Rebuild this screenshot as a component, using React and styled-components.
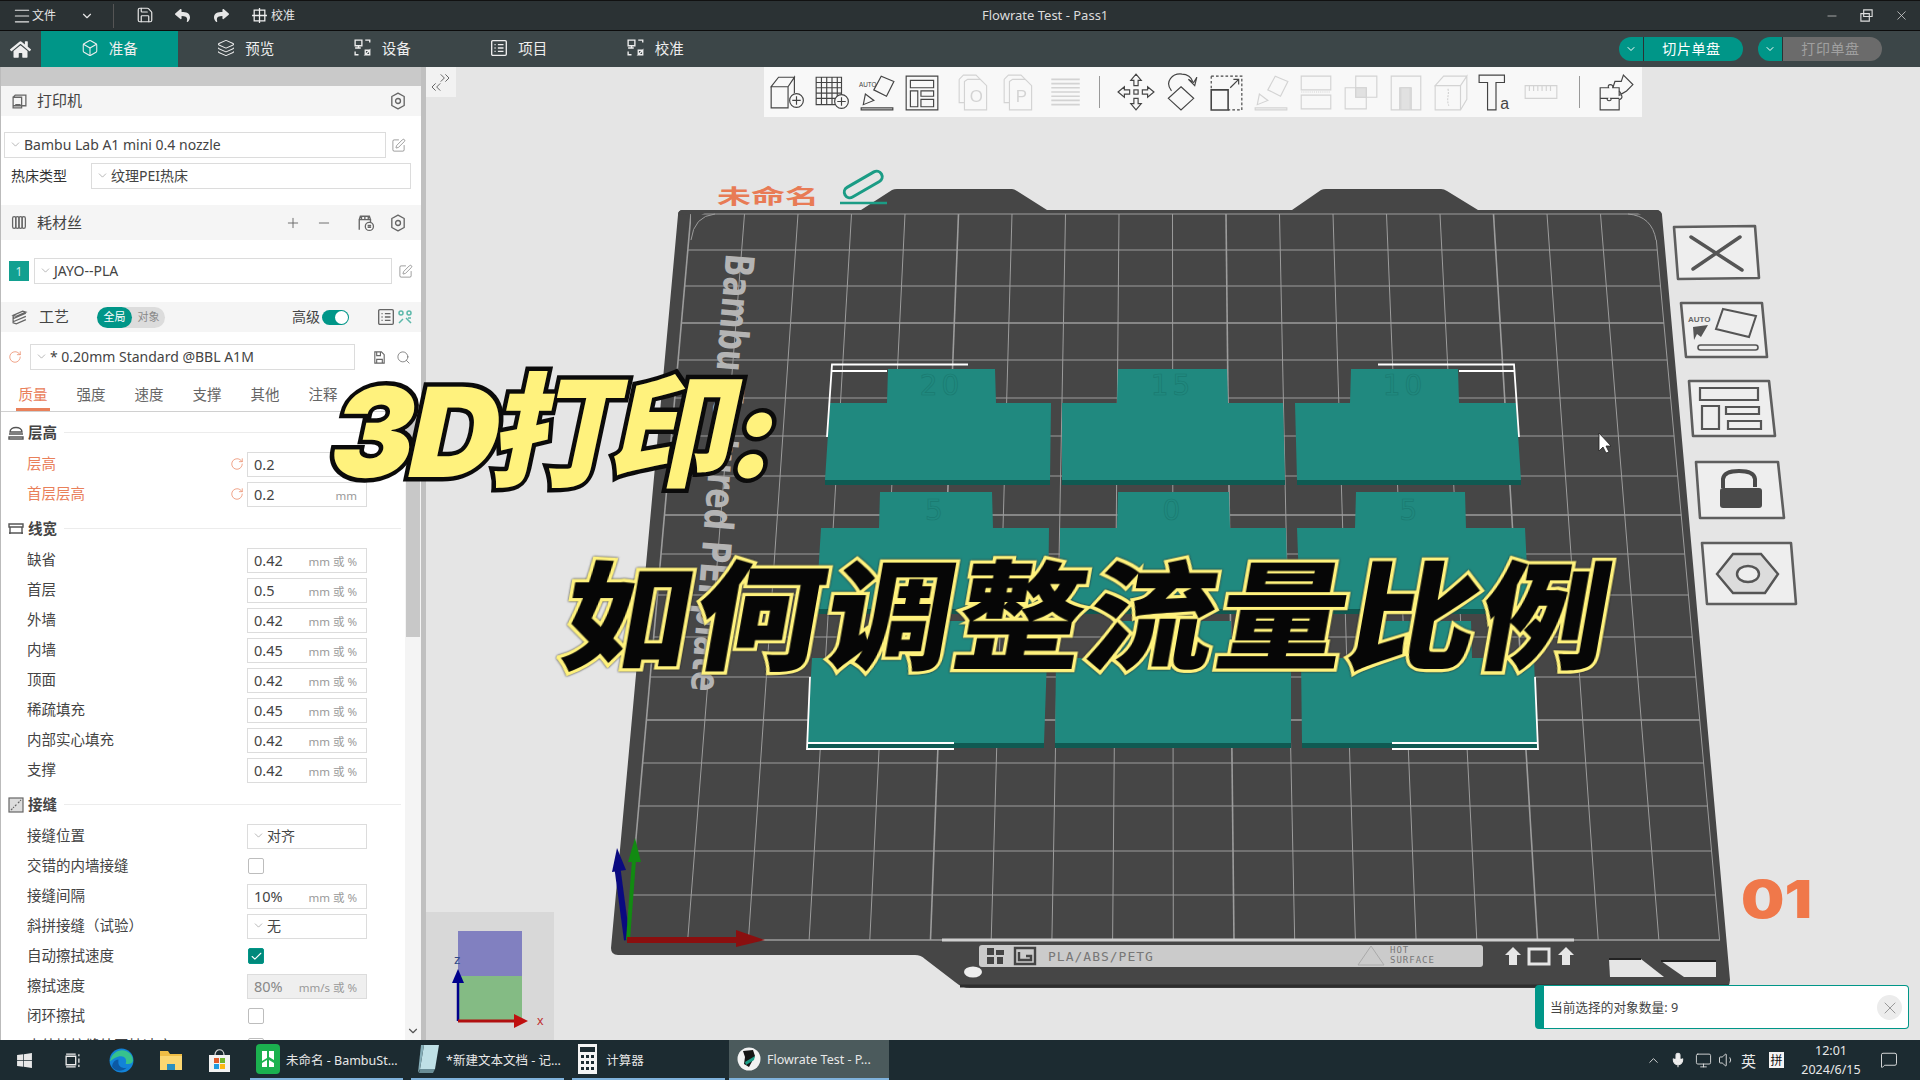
import React from "react";
import styled, { createGlobalStyle } from "styled-components";
import {
  Menu,
  ChevronDown,
  Save,
  Box,
  Layers,
  SquarePen,
  Plus,
  Minus,
  Search,
  Check,
  X,
  RotateCw,
  ChevronsLeft,
  ChevronsRight,
  ChevronUp,
  Mic,
  Volume1,
  Monitor,
  MessageSquare,
} from "lucide-react";
import { FaReply, FaShare, FaHome, FaWindows } from "react-icons/fa";

const UI_FONT = `"Noto Sans", "Noto Sans CJK SC", sans-serif`;
const TEAL = "#009688";
const ORANGE = "#e9805a";

const GlobalStyle = createGlobalStyle`
  html, body {
    margin: 0;
    padding: 0;
    width: 1920px;
    height: 1080px;
    overflow: hidden;
    background: #e5e5e5;
    font-family: ${UI_FONT};
  }
  * { box-sizing: border-box; }
`;

const Root = styled.div`
  position: relative;
  width: 1920px;
  height: 1080px;
  display: flex;
  flex-direction: column;
  overflow: hidden;
`;

/* ---------- title bar ---------- */

const TitleBar = styled.div`
  height: 31px;
  flex: none;
  display: flex;
  align-items: center;
  background: #2b3234;
  border-top: 1px solid #111;
  border-bottom: 1px solid #0c0c0c;
  color: #e6e6e6;
`;

const TitleLeft = styled.div`
  width: 982px;
  flex: none;
  display: flex;
  align-items: center;
  padding-left: 12px;
  font-size: 12px;
`;

const TitleSep = styled.div`
  width: 1px;
  height: 24px;
  background: #555;
  margin: 0 22px 0 19px;
`;

const TitleBtn = styled.span`
  display: flex;
  align-items: center;
  width: ${(p) => p.$w || 39}px;
  padding-bottom: 1px;
`;

const WindowTitle = styled.div`
  flex: 1;
  font-size: 13px;
  padding-bottom: 1px;
  color: #dcdcdc;
`;

const WindowControls = styled.div`
  display: flex;
  align-items: center;
  gap: 20px;
  padding-right: 11px;
  color: #d8d8d8;
`;

/* ---------- nav bar ---------- */

const NavBar = styled.div`
  height: 36px;
  flex: none;
  display: flex;
  align-items: stretch;
  background: #3c4648;
  color: #eee;
`;

const HomeCell = styled.div`
  width: 41px;
  display: flex;
  align-items: center;
  justify-content: center;
`;

const NavTab = styled.div`
  width: 136.5px;
  display: flex;
  align-items: center;
  justify-content: center;
  gap: 10px;
  padding-bottom: 3px;
  font-size: 14.5px;
  background: ${(p) => (p.$active ? TEAL : "transparent")};
`;

const NavActions = styled.div`
  margin-left: auto;
  display: flex;
  align-items: center;
  gap: 15px;
  padding-right: 38px;
`;

const SplitButton = styled.div`
  width: 124px;
  height: 24px;
  display: flex;
  border-radius: 12px;
  overflow: hidden;
  font-size: 14px;
`;

const SplitArrow = styled.div`
  width: 25px;
  background: ${TEAL};
  border-right: 1px solid #2b3234;
  display: flex;
  align-items: center;
  justify-content: center;
  color: #fff;
`;

const SplitLabel = styled.div`
  flex: 1;
  display: flex;
  align-items: center;
  justify-content: center;
  padding: 0 4px 2px 0;
  letter-spacing: 0.6px;
  background: ${(p) => (p.$off ? "#6b6b6b" : TEAL)};
  color: ${(p) => (p.$off ? "#a0a0a0" : "#fff")};
`;

/* ---------- left panel ---------- */

const Main = styled.div`
  flex: 1;
  min-height: 0;
  display: flex;
`;

const Panel = styled.div`
  position: relative;
  width: 421px;
  flex: none;
  overflow: hidden;
  background: #fff;
  border-left: 1px solid #bbb;
  color: #333;
`;

const TopStrip = styled.div`
  height: 19px;
  background: #c9c9c9;
`;

const PanelHeader = styled.div`
  height: ${(p) => p.$h || 30}px;
  margin-top: ${(p) => p.$mt || 0}px;
  display: flex;
  align-items: center;
  background: #f5f5f5;
  padding: 0 ${(p) => p.$pr || 14}px 0 10px;
  font-size: 15px;
  color: #444;
`;

const HeaderTitle = styled.span`
  margin-left: ${(p) => p.$ml || 9}px;
  padding-bottom: 3px;
`;

const HeaderEnd = styled.div`
  margin-left: ${(p) => p.$ml || "auto"};
  display: flex;
  align-items: center;
  gap: ${(p) => p.$gap || 0}px;
  color: #666;
`;

const IconGap = styled.span`
  width: ${(p) => p.$w}px;
  flex: none;
`;

const FormRow = styled.div`
  height: 26px;
  margin-top: ${(p) => p.$mt || 0}px;
  padding-left: ${(p) => p.$pl || 0}px;
  display: flex;
  align-items: center;
  font-size: 14px;
  color: #555;
`;

const SelectBox = styled.div`
  height: ${(p) => p.$h || 26}px;
  width: ${(p) => p.$w}px;
  margin-left: ${(p) => p.$ml || 0}px;
  display: flex;
  align-items: center;
  gap: 2px;
  padding: 0 0 2px 4px;
  background: #fff;
  border: 1px solid #dcdcdc;
  font-size: 14px;
  color: #444;
`;

const BedLabel = styled.span`
  width: 80px;
  padding-bottom: 2px;
  color: #333;
`;

const Swatch = styled.div`
  width: 20px;
  height: 20px;
  background: #12a090;
  color: #cdeee9;
  font-size: 12px;
  display: flex;
  align-items: center;
  justify-content: center;
`;

const ModeToggle = styled.div`
  width: 68px;
  height: 21px;
  margin-left: 28px;
  display: flex;
  border-radius: 11px;
  background: #dcdcdc;
  font-size: 11px;
  color: #888;
`;

const ModeItem = styled.span`
  width: ${(p) => (p.$on ? 35 : 33)}px;
  display: flex;
  align-items: center;
  justify-content: center;
  padding-bottom: 2px;
  border-radius: 11px;
  background: ${(p) => (p.$on ? TEAL : "transparent")};
  color: ${(p) => (p.$on ? "#fff" : "#888")};
`;

const SwitchTrack = styled.span`
  width: 27px;
  height: 15px;
  margin: 0 28px 0 2px;
  border-radius: 8px;
  background: ${TEAL};
  position: relative;
`;

const SwitchKnob = styled.span`
  position: absolute;
  right: 1px;
  top: 1px;
  width: 13px;
  height: 13px;
  border-radius: 50%;
  background: #fff;
`;

const AdvLabel = styled.span`
  padding-bottom: 3px;
  font-size: 14px;
  color: #444;
`;

const TabRow = styled.div`
  height: 34px;
  margin-top: 8px;
  display: flex;
  align-items: stretch;
  padding-left: 15px;
  border-bottom: 1px solid #d0d0d0;
`;

const ParamTab = styled.div`
  width: 34px;
  margin-right: 24px;
  display: flex;
  align-items: center;
  justify-content: center;
  font-size: 14.5px;
  white-space: nowrap;
  color: ${(p) => (p.$active ? ORANGE : "#666")};
  border-bottom: 3px solid ${(p) => (p.$active ? ORANGE : "transparent")};
`;

const SectionHeader = styled.div`
  height: 33px;
  margin-top: ${(p) => p.$mt || 3}px;
  width: 400px;
  display: flex;
  align-items: center;
  padding-left: 7px;
  gap: 4px;
  font-size: 14.5px;
  font-weight: 700;
  color: #444;

  &::after {
    content: "";
    flex: 1;
    height: 1px;
    margin-left: 3px;
    background: #ececec;
  }
`;

const SectionTitle = styled.span`
  padding-bottom: 3px;
`;

const ParamRow = styled.div`
  height: 30px;
  width: 400px;
  display: flex;
  align-items: center;
  padding-left: 26px;
  font-size: 14.5px;
  color: ${(p) => (p.$mod ? ORANGE : "#444")};
`;

const ParamLabel = styled.span`
  flex: 1;
  padding-bottom: 3px;
  white-space: nowrap;
`;

const ResetSlot = styled.span`
  width: ${(p) => p.$w || 17}px;
  display: flex;
  color: ${ORANGE};
`;

const FieldSlot = styled.div`
  width: 120px;
  margin-right: 34px;
`;

const Field = styled.div`
  height: 25px;
  display: flex;
  align-items: center;
  justify-content: space-between;
  padding: 0 9px 1px 6px;
  border: 1px solid #dcdcdc;
  background: ${(p) => (p.$off ? "#efefef" : "#fff")};
  color: ${(p) => (p.$off ? "#888" : "#444")};
  font-size: 14.5px;
`;

const Unit = styled.span`
  font-size: 11.5px;
  padding-top: 3px;
  color: #999;
`;

const CheckBox = styled.div`
  width: 16px;
  height: 16px;
  margin-left: 1px;
  border-radius: 2px;
  border: 1px solid ${(p) => (p.$on ? TEAL : "#bdbdbd")};
  background: ${(p) => (p.$on ? "#00897b" : "#fff")};
  display: flex;
  align-items: center;
  justify-content: center;
  color: #fff;
`;

const ScrollTrack = styled.div`
  position: absolute;
  right: 0;
  top: 345px;
  bottom: 0;
  width: 16px;
  background: #f4f4f4;
`;

const ScrollThumb = styled.div`
  height: 225px;
  margin: 0 1px;
  background: #c8c8c8;
`;

const ScrollArrow = styled.div`
  position: absolute;
  right: 1px;
  bottom: 2px;
  color: #555;
  display: flex;
`;

const PanelDivider = styled.div`
  width: 5px;
  flex: none;
  background: #c0c0c0;
`;

/* ---------- 3d canvas ---------- */

const Canvas = styled.div`
  position: relative;
  flex: 1;
  background: #e5e5e5;
  overflow: hidden;
`;

const SceneSvg = styled.svg`
  position: absolute;
  left: 0;
  top: 0;
  width: 1494px;
  height: 973px;
`;

const Toolbar = styled.div`
  position: absolute;
  left: 338px;
  top: 0;
  width: 878px;
  height: 50px;
  display: flex;
  align-items: center;
  background: #f8f8f8;
`;

const ToolBtn = styled.div`
  width: 45px;
  flex: none;
  margin-left: ${(p) => p.$ml || 0}px;
  display: flex;
  justify-content: center;
  opacity: ${(p) => (p.$off ? 0.2 : 1)};
`;

const ToolSep = styled.div`
  width: 1px;
  height: 32px;
  flex: none;
  margin: 0 13px 0 ${(p) => p.$ml}px;
  background: #999;
`;

const CollapseBtn = styled.div`
  position: absolute;
  left: 0;
  top: 0;
  width: 30px;
  height: 30px;
  background: #f2f2f2;
  color: #444;
`;

const CollapseUp = styled.span`
  position: absolute;
  right: 3px;
  top: 3px;
  display: flex;
`;

const CollapseDown = styled.span`
  position: absolute;
  left: 2px;
  bottom: 2px;
  display: flex;
`;

const Notice = styled.div`
  position: absolute;
  left: 1109px;
  top: 918px;
  width: 374px;
  height: 44px;
  display: flex;
  align-items: center;
  padding: 0 0 2px 6px;
  background: #fff;
  border: 1px solid ${TEAL};
  border-left: 9px solid ${TEAL};
  border-radius: 4px;
  font-size: 12.7px;
  color: #444;
`;

const NoticeClose = styled.span`
  position: absolute;
  right: 6px;
  top: 9px;
  width: 25px;
  height: 25px;
  border-radius: 50%;
  background: #ececec;
  color: #888;
  display: flex;
  align-items: center;
  justify-content: center;
`;

/* ---------- taskbar ---------- */

const TaskBar = styled.div`
  height: 40px;
  flex: none;
  display: flex;
  align-items: stretch;
  background: #1c2b31;
  color: #e8e8e8;
  font-size: 12.5px;
`;

const TaskIcon = styled.div`
  width: ${(p) => p.$w}px;
  flex: none;
  display: flex;
  align-items: center;
  justify-content: center;
`;

const TaskApp = styled.div`
  width: ${(p) => (p.$active ? 160 : 153)}px;
  flex: none;
  margin-left: ${(p) => (p.$active ? 4 : 8)}px;
  display: flex;
  align-items: center;
  gap: 6px;
  padding-left: ${(p) => (p.$active ? 8 : 6)}px;
  white-space: nowrap;
  background: ${(p) => (p.$active ? "#4b5a5c" : "transparent")};
  border-bottom: 2px solid #7fb2dc;
`;

const Tray = styled.div`
  margin-left: auto;
  display: flex;
  align-items: center;
  padding-right: 22px;
`;

const TrayItem = styled.span`
  display: flex;
  align-items: center;
  margin-left: ${(p) => p.$ml || 0}px;
  font-size: ${(p) => p.$size || 13}px;
`;

const ImeBox = styled.span`
  width: 15px;
  height: 16px;
  margin-left: 13px;
  display: flex;
  align-items: center;
  justify-content: center;
  background: #f4f4f4;
  color: #111;
  font-size: 12px;
`;

const Clock = styled.div`
  width: 62px;
  margin: 0 18px 0 16px;
  text-align: center;
  font-size: 12.5px;
  line-height: 19px;
`;

/* ---------- thumbnail caption over the whole shot ---------- */

const CaptionTop = styled.div`
  position: absolute;
  left: 334px;
  top: 358px;
  font-family: "Inter", "Noto Sans CJK SC", sans-serif;
  font-weight: 900;
  font-size: 124px;
  line-height: 1.2;
  letter-spacing: -5px;
  white-space: nowrap;
  color: #fff27d;
  -webkit-text-stroke: 9px #0b0b0b;
  paint-order: stroke fill;
  transform: skewX(-12deg);
`;

const CaptionMain = styled.div`
  position: absolute;
  left: 566px;
  top: 520px;
  font-family: "Noto Sans CJK SC", sans-serif;
  font-weight: 900;
  font-size: 128px;
  line-height: 1.4;
  letter-spacing: 3px;
  white-space: nowrap;
  color: #060606;
  -webkit-text-stroke: 7px #fff27d;
  paint-order: stroke fill;
  transform: skewX(-10deg) scaleY(0.92);
  filter: drop-shadow(0 0 1px #222);
`;

/* ---------- small drawn icons ---------- */

const Ic = ({ s = 16, children, color = "#666", sw = 1.2, fill = "none" }) => (
  <svg width={s} height={s} viewBox="0 0 16 16" fill={fill} stroke={color} strokeWidth={sw}>
    {children}
  </svg>
);

const GearHex = () => (
  <Ic s={18}>
    <path d="M8 1l5.5 3v8L8 15l-5.5-3V4z" strokeLinejoin="round" />
    <circle cx="8" cy="8" r="2.2" />
  </Ic>
);

const PrinterIcon = () => (
  <Ic s={17}>
    <path d="M4 2h10v10H2V4z M2 4h8v10H2z M4 11h5" />
  </Ic>
);

const SpoolIcon = () => (
  <Ic s={17}>
    <rect x="1.5" y="2.5" width="3" height="11" rx="1.5" />
    <rect x="4.5" y="2.5" width="3" height="11" rx="1.5" />
    <rect x="7.5" y="2.5" width="3" height="11" rx="1.5" />
    <rect x="10.5" y="2.5" width="3" height="11" rx="1.5" />
  </Ic>
);

const StackIcon = () => (
  <Ic s={17}>
    <path d="M2 6l9-4 3 1-9 4zM2 9l12-5M2 12l12-5M2 6v7l3 1 9-4" />
  </Ic>
);

const DeviceIcon = ({ color = "#eee" }) => (
  <Ic s={18} color={color}>
    <path d="M1 1h6v5H1zM4 6v2M1 8h5M10 1h4v2M14 10v4h-4zM1 11v3h3M10 10h4v4h-4z" />
  </Ic>
);

const ProjectIcon = () => (
  <Ic s={18} color="#eee">
    <rect x="1.5" y="1.5" width="13" height="13" rx="1" />
    <path d="M4 5h1M7 5h5M4 8h1M7 8h5M4 11h1M7 11h5" />
  </Ic>
);

const SectionLayers = () => (
  <Ic s={16} color="#555" sw={1.4}>
    <path d="M2 7c0-6 12-6 12 0zM1 9h14M1 12h14v2H1z" />
  </Ic>
);

const SectionWidth = () => (
  <Ic s={16} color="#555" sw={1.4}>
    <path d="M1 3h14v3H1zM1 12h14M2 6v7M14 6v7" />
  </Ic>
);

const SectionSeam = () => (
  <Ic s={16} color="#666">
    <rect x="1" y="1" width="14" height="14" fill="#ddd" />
    <path d="M3 13l3-3M7 9l2-2M10 6l3-3" strokeDasharray="2 1" />
  </Ic>
);

const CalibIcon = ({ color = "#eee" }) => (
  <Ic s={17} color={color}>
    <path d="M3 3h10v10H3zM8 1v14M1 8h14" />
  </Ic>
);

const BarsIcon = () => (
  <Ic s={18} color="#666">
    <rect x="1.5" y="1.5" width="13" height="13" rx="1" />
    <path d="M4 5h1M7 5h5M4 8h1M7 8h5M4 11h1M7 11h5" />
  </Ic>
);

const FilterIcon = () => (
  <Ic s={16} color="#5cb8aa" sw={1.5}>
    <circle cx="4" cy="4" r="2" />
    <circle cx="12" cy="4" r="2" />
    <path d="M2 14l4-4M9 9l5 5M11 9h3" />
  </Ic>
);

const SyncIcon = () => (
  <Ic s={18} color="#666">
    <path d="M2 14V5h10v4M2 5l1-3h8l1 3M4 2v3M7 2v3M10 2v3" />
    <circle cx="11" cy="11" r="3.6" fill="#fff" />
    <path d="M9.4 10.2h3.2M9.4 11.8h3.2" />
  </Ic>
);

const DiskIcon = () => (
  <Ic s={15} color="#666">
    <path d="M3 2h7l3 3v9H3zM5 2v4h4V2M5 14v-4h6v4" />
  </Ic>
);

const EdgeLogo = () => (
  <svg width="25" height="25" viewBox="0 0 24 24">
    <circle cx="12" cy="12" r="11.5" fill="#1283d8" />
    <path d="M1 13C2 5 10 0 17 3c4 2 6 5 6 9 0 3-4 4-7 3 2-5-2-8-6-7-4 1-7 3-9 5z" fill="#37c28d" />
    <path d="M9 14c0 4 4 6 8 5-4 4-11 4-14-1 0-4 3-7 6-7z" fill="#0c59a4" />
  </svg>
);

const FolderLogo = () => (
  <svg width="24" height="22" viewBox="0 0 24 22">
    <path d="M1 2h8l2 3h12v16H1z" fill="#f0bd45" />
    <path d="M1 7h22v14H1z" fill="#fcd772" />
    <path d="M8 15h8v6H8z" fill="#2c8fc0" />
  </svg>
);

const StoreLogo = () => (
  <svg width="23" height="25" viewBox="0 0 23 25">
    <path d="M7 7c0-7 9-7 9 0" fill="none" stroke="#ddd" strokeWidth="1.2" />
    <path d="M1 7h21v17H1z" fill="#f2f2f2" />
    <path d="M6 10h5v5H6z" fill="#e25a2a" />
    <path d="M12 10h5v5h-5z" fill="#6fb52c" />
    <path d="M6 16h5v5H6z" fill="#1f9ae0" />
    <path d="M12 16h5v5h-5z" fill="#fcb813" />
  </svg>
);

const BambuLogo = () => (
  <svg width="24" height="30" viewBox="0 0 24 30">
    <rect width="24" height="30" rx="4" fill="#1bb14f" />
    <path d="M6 7h5v7l-5 3zM13 7h5v9l-5-3zM6 19l5-3v7H6zM13 16l5 3v4h-5z" fill="#fff" />
  </svg>
);

const NotepadLogo = () => (
  <svg width="23" height="30" viewBox="0 0 23 30">
    <path d="M7 1h15l-4 24H3z" fill="#bfe0e6" />
    <path d="M3 25h15l-2 4H2z" fill="#6a8d96" />
    <path d="M7 1L3 25l-2 4 3-28z" fill="#85aeb8" />
  </svg>
);

const CalcLogo = () => (
  <svg width="19" height="30" viewBox="0 0 19 30">
    <rect width="19" height="30" fill="#f4f4f4" />
    <rect x="2" y="3" width="15" height="5" fill="#1c2b31" />
    <path
      d="M3 11h3v3H3zM8 11h3v3H8zM13 11h3v3h-3zM3 17h3v3H3zM8 17h3v3H8zM13 17h3v3h-3zM3 23h3v3H3zM8 23h3v3H8zM13 23h3v3h-3z"
      fill="#1c2b31"
    />
  </svg>
);

const StudioLogo = () => (
  <svg width="24" height="24" viewBox="0 0 24 24">
    <circle cx="12" cy="12" r="11.5" fill="#f2f2f2" />
    <path d="M6 4l10-1 2 6-6 11-5-3 1-7z" fill="#151515" />
    <path d="M8 15l10-6-1 4-8 5z" fill="#1b9c85" />
  </svg>
);

/* ---------- toolbar drawings, all on a 36 box ---------- */

const T = ({ children }) => (
  <svg width="38" height="38" viewBox="0 0 36 36" fill="none" stroke="#444" strokeWidth="1.1">
    {children}
  </svg>
);

const SmallLetter = styled.text`
  font-family: "Liberation Sans", sans-serif;
  stroke: none;
  fill: #444;
`;

const plusCircle = (cx, cy) => (
  <>
    <circle cx={cx} cy={cy} r="6.5" fill="#f8f8f8" />
    <path d={`M${cx - 4} ${cy}h8M${cx} ${cy - 4}v8`} />
  </>
);

const TOOL_ICONS = {
  cube: (
    <T>
      <path d="M3 13l7-9h15l-6 9zM3 13h16v20H3zM19 13l6-9v15" />
      {plusCircle(27, 26)}
    </T>
  ),
  grid: (
    <T>
      <path d="M3 4h24v26H3zM3 9h24M3 14h24M3 19h24M3 24h24M8 4v26M13 4v26M18 4v26M23 4v26" />
      {plusCircle(27, 27)}
    </T>
  ),
  auto: (
    <T>
      <path d="M15 16l7-13 12 5-7 14zM3 33h30v2H3zM5 30l2-10 8 6z" />
      <SmallLetter x="1" y="13" fontSize="6">AUTO</SmallLetter>
    </T>
  ),
  layout: (
    <T>
      <path d="M3 3h30v32H3zM7 7h22v7H7zM7 17h7v15H7zM17 17h12v5H17zM17 25h12v7H17z" />
    </T>
  ),
  page0: (
    <T>
      <path d="M3 6l4-4h12l4 4M8 8l3-2h12l6 6v23H8zM3 6v22h5" />
      <SmallLetter x="13" y="27" fontSize="16">O</SmallLetter>
    </T>
  ),
  pageP: (
    <T>
      <path d="M3 6l4-4h12l4 4M8 8l3-2h12l6 6v23H8zM3 6v22h5" />
      <SmallLetter x="14" y="27" fontSize="16">P</SmallLetter>
    </T>
  ),
  lines: (
    <T>
      <path d="M5 6h27M5 10h27M5 14h27M5 18h27M5 22h27M5 26h27M5 30h27" strokeWidth="1.6" />
    </T>
  ),
  move: (
    <T>
      <path d="M18 1l5 6h-3v5h-4V7h-3zM18 35l5-6h-3v-5h-4v5h-3zM1 18l6-5v3h5v4H7v3zM35 18l-6-5v3h-5v4h5v3z" />
      <rect x="16" y="16" width="4" height="4" />
    </T>
  ),
  rotate: (
    <T>
      <path d="M18 13l12 11-12 11L6 24zM9 17C2 8 10 0 19 1c5 0 9 3 10 7" />
      <path d="M25 6l5 3 3-5-2 8z" />
    </T>
  ),
  scale: (
    <T>
      <path d="M4 3h29v32H20" strokeDasharray="2.5 2" />
      <path d="M4 3v12" strokeDasharray="2.5 2" />
      <path d="M4 16h16v19H4z" strokeWidth="1.5" />
      <path d="M22 14l8-8M25 6h5v5" />
    </T>
  ),
  lay: (
    <T>
      <path d="M15 16l7-13 12 5-7 14zM3 33h30v2H3zM5 30l2-10 8 6z" />
    </T>
  ),
  cut: (
    <T>
      <path d="M4 3h28v13H4zM4 21h28v13H4z" />
      <path d="M4 18h28" strokeDasharray="1 1" />
    </T>
  ),
  bool: (
    <T>
      <path d="M3 14h20v20H3zM13 3h20v20H13z" />
      <path d="M13 14h10v9H13z" fill="#888" />
    </T>
  ),
  support: (
    <T>
      <path d="M4 3h28v32h-9V14H12v21H4z" />
      <path d="M13 14h9v21h-9z" fill="#888" />
    </T>
  ),
  seam: (
    <T>
      <path d="M3 12l8-9h22L27 12zM3 12h24v23H3zM27 12l6-9v22l-6 10" />
      <path d="M15 15c2 5-2 9 1 16" strokeDasharray="2 1" />
    </T>
  ),
  text: (
    <T>
      <path d="M2 2h24v7h-8v26h-8V9H2z" />
      <SmallLetter x="22" y="34" fontSize="15">a</SmallLetter>
    </T>
  ),
  ruler: (
    <T>
      <path d="M3 12h30v12H3zM7 12v5M11 12v5M15 12v5M19 12v5M23 12v5M27 12v5" />
    </T>
  ),
  puzzle: (
    <T>
      <path d="M3 14h8c-2-4 5-4 4 0h6v7c3-2 4 4 0 4v10H3z" />
      <path d="M3 24h7c-2 3 5 3 3 0h8" />
      <path d="M15 14l2-6 6 0 2-6 9 9-6 6 0 0-5 3-2-3" />
    </T>
  ),
};

/* ---------- the build plate ---------- */

const GRID_Y = [214, 250, 286, 323, 360, 398, 436, 476, 515, 554, 595, 637, 677, 720, 763, 806, 851, 895, 940];

const edgeX = (y, side) => {
  const t = (y - 214) / (940 - 214);
  return side === "l" ? 691 - 64 * t : 1654 + 66 * t;
};

const BLOCKS = [
  { tab: [887, 996, 369, 403], top: [830, 1051], bottom: [825, 1050], y: 480, label: "20" },
  { tab: [1117, 1228, 369, 403], top: [1062, 1283], bottom: [1062, 1285], y: 480, label: "15" },
  { tab: [1350, 1459, 369, 403], top: [1295, 1516], bottom: [1297, 1521], y: 480, label: "10" },
  { tab: [879, 993, 492, 528], top: [821, 1049], bottom: [816, 1048], y: 609, label: "5" },
  { tab: [1117, 1230, 492, 528], top: [1060, 1286], bottom: [1060, 1288], y: 609, label: "0" },
  { tab: [1355, 1466, 492, 528], top: [1297, 1525], bottom: [1300, 1529], y: 609, label: "5" },
  { tab: [877, 989, 621, 658], top: [812, 1047], bottom: [807, 1044], y: 743, label: "" },
  { tab: [1117, 1232, 621, 658], top: [1056, 1291], bottom: [1055, 1291], y: 743, label: "" },
  { tab: [1359, 1472, 621, 658], top: [1301, 1534], bottom: [1302, 1537], y: 743, label: "" },
];

const PlateNumber = styled.text`
  font-family: "DejaVu Sans", sans-serif;
  font-size: 28px;
  fill: none;
  stroke: #1a7a70;
  stroke-width: 0.7;
  letter-spacing: 4px;
`;

const BedTitle = styled.text`
  font-family: "DejaVu Sans", sans-serif;
  font-weight: 700;
  font-size: 40px;
  fill: #b4b4b4;
`;

const ProjectName = styled.text`
  font-family: "Noto Sans CJK SC", sans-serif;
  font-weight: 700;
  font-size: 29px;
  fill: #e87b55;
`;

const PlateLabel = styled.text`
  font-family: "DejaVu Sans Mono", monospace;
  font-size: ${(p) => p.$size}px;
  letter-spacing: 1px;
  fill: #777;
`;

const BigNumber = styled.text`
  font-family: "Inter", sans-serif;
  font-weight: 900;
  font-size: 52px;
  fill: #f0784a;
`;

const AxisLetter = styled.text`
  font-family: "Liberation Sans", sans-serif;
  font-size: 13px;
  fill: ${(p) => p.$c};
`;

const AutoSticker = styled.text`
  font-family: "Liberation Sans", sans-serif;
  font-weight: 700;
  font-size: 8px;
  fill: #666;
`;

const Block = ({ tab, top, bottom, y, label }) => {
  const [tl, tr, ty, tb] = tab;
  return (
    <g>
      <polygon points={`${bottom[0]},${y} ${bottom[1]},${y} ${bottom[1]},${y + 5} ${bottom[0]},${y + 5}`} fill="#0f5a52" />
      <polygon
        points={`${tl + 1},${ty} ${tr - 1},${ty} ${tr},${tb} ${top[1]},${tb} ${bottom[1]},${y} ${bottom[0]},${y} ${top[0]},${tb} ${tl},${tb}`}
        fill="#20897f"
      />
      <PlateNumber x={(tl + tr) / 2} y={tb - 8} textAnchor="middle">
        {label}
      </PlateNumber>
    </g>
  );
};

const Sticker = ({ points, children }) => (
  <g>
    <polygon points={points} fill="#eeeeee" stroke="#5e5e5e" strokeWidth="2.6" strokeLinejoin="round" />
    {children}
  </g>
);

const Scene = () => (
  <SceneSvg viewBox="426 67 1494 973">
    {/* mini axes view */}
    <rect x="426" y="912" width="128" height="128" fill="#d8d8d8" />
    <rect x="458" y="931" width="64" height="45" fill="#8180c0" />
    <rect x="458" y="976" width="64" height="45" fill="#84bb84" />
    <path d="M458 1021V980" stroke="#00008c" strokeWidth="2.5" />
    <path d="M452 983l6-14 6 14z" fill="#00008c" />
    <path d="M458 1021h56" stroke="#b01010" strokeWidth="3" />
    <path d="M514 1014l14 7-14 7z" fill="#c01010" />
    <AxisLetter x="454" y="964" $c="#334a88">z</AxisLetter>
    <AxisLetter x="537" y="1025" $c="#c03030">x</AxisLetter>

    {/* plate */}
    <path
      d="M678 215Q678 210 683 210H861L892 190Q894 189 897 189H1012Q1014 189 1017 191L1047 210H1292L1321 190Q1323 189 1326 189H1441Q1444 189 1447 191L1478 210H1656Q1661 210 1662 215L1730 980Q1730 988 1722 988H970Q962 988 955 982L925 959Q921 955 915 955H618Q611 955 611 948Z"
      fill="#464646"
    />
    <path d="M960 986H1729" stroke="#2e2e2e" strokeWidth="3" />

    {GRID_Y.map((y, i) => (
      <line
        key={y}
        x1={edgeX(y, "l")}
        x2={edgeX(y, "r")}
        y1={y}
        y2={y}
        stroke="#9c9c9c"
        strokeWidth={i % 5 === 3 ? 1.6 : 1}
      />
    ))}
    {Array.from({ length: 19 }, (_, i) => (
      <line
        key={i}
        x1={691 + 53.5 * i}
        y1="214"
        x2={627 + 60.7 * i}
        y2="940"
        stroke="#9c9c9c"
        strokeWidth={i % 5 === 0 ? 1.6 : 1}
      />
    ))}
    <path d="M942 940H1574" stroke="#cfcfcf" strokeWidth="3" />

    {/* plate corners, over the grid ends */}
    <path d="M678 215Q678 210 683 210H715Q694 212 691 236L691 214Z" fill="#464646" />
    <path d="M1662 215Q1661 210 1656 210H1628Q1652 214 1656 240L1660 240Z" fill="#464646" />
    <path d="M715 214Q694 216 691 240" fill="none" stroke="#9c9c9c" />
    <path d="M1628 214Q1652 216 1656 240" fill="none" stroke="#9c9c9c" />

    <BedTitle transform="translate(726 253) rotate(94.6)" textLength="439" lengthAdjust="spacingAndGlyphs">
      Bambu Textured PEI plate
    </BedTitle>

    {/* label strip */}
    <rect x="979" y="945" width="504" height="22" rx="3" fill="#cbcbcb" />
    <path d="M987 948h7v7h-7zM996 950h8v5h-8zM987 957h7v7h-7zM997 957h6v7h-6z" fill="#444" />
    <path d="M1015 948h20v16h-20z M1019 952v8h12v-4h-5" fill="none" stroke="#444" strokeWidth="2.4" />
    <PlateLabel x="1048" y="961" $size={13}>PLA/ABS/PETG</PlateLabel>
    <path d="M1358 965l13-19 13 19z" fill="none" stroke="#aaa" />
    <PlateLabel x="1390" y="953" $size={9}>HOT</PlateLabel>
    <PlateLabel x="1390" y="963" $size={9}>SURFACE</PlateLabel>
    <path d="M1513 947l8 8h-4v10h-8v-10h-4zM1566 947l8 8h-4v10h-8v-10h-4z" fill="#e6e6e6" />
    <rect x="1529" y="949" width="20" height="15" fill="none" stroke="#e6e6e6" strokeWidth="3" />
    <ellipse cx="973" cy="972" rx="9" ry="5.5" fill="#eeeeee" />
    <path d="M1609 959H1641L1664 977H1610Z" fill="#e5e5e5" />
    <path d="M1661 961H1716V977H1684Z" fill="#e5e5e5" />
    <path d="M1609 959H1641M1661 961H1716" stroke="#222" strokeWidth="2" />

    {BLOCKS.map((b, i) => (
      <Block key={i} {...b} />
    ))}

    {/* selection corners */}
    <path
      d="M968 364.5H832L827 437M887 371H832M1378 364.5H1514L1519 437M1459 371H1514M954 743H807M954 749H807L810 677M1392 743H1538M1392 749H1538L1535 677"
      fill="none"
      stroke="#fff"
      strokeWidth="1.8"
    />

    {/* move gizmo */}
    <path d="M627 940L617 865" stroke="#0a0a80" strokeWidth="6" />
    <path d="M612 872L617 848 626 870Z" fill="#0a0a80" />
    <path d="M628 940L634 860" stroke="#128a12" strokeWidth="4" />
    <path d="M628 862L635 838 641 862Z" fill="#128a12" />
    <path d="M627 940H738" stroke="#8a0f0f" strokeWidth="6" />
    <path d="M736 930L765 940 736 947Z" fill="#8a0f0f" />

    {/* stickers beside the plate */}
    <ProjectName x="717" y="208" textLength="102" lengthAdjust="spacingAndGlyphs" transform="translate(0 58) scale(1 .7)">
      未命名
    </ProjectName>
    <rect x="842" y="179" width="42" height="11" rx="5.5" transform="rotate(-30 863 184)" fill="none" stroke="#1b9c85" strokeWidth="3" />
    <path d="M840 203H887" stroke="#1b9c85" strokeWidth="2.4" />

    <Sticker points="1674,227 1755,226 1759,278 1678,279">
      <path d="M1691 237L1742 270M1740 237L1693 269" stroke="#555" strokeWidth="3.5" strokeLinecap="round" />
    </Sticker>
    <Sticker points="1681,303 1762,303 1767,357 1686,357">
      <AutoSticker x="1688" y="322">AUTO</AutoSticker>
      <path d="M1723 309L1756 316 1749 337 1716 329Z" fill="none" stroke="#555" strokeWidth="2" />
      <path d="M1693 327L1708 325 1701 337 1697 334 1694 340Z" fill="#555" />
      <rect x="1698" y="345" width="60" height="5" rx="2.5" fill="none" stroke="#555" strokeWidth="1.6" />
    </Sticker>
    <Sticker points="1689,381 1769,381 1775,436 1693,436">
      <path d="M1700 388H1758V400H1700ZM1702 406H1719V429H1702ZM1726 407H1759V414H1726ZM1728 421H1761V429H1728Z" fill="none" stroke="#555" strokeWidth="2.2" />
    </Sticker>
    <Sticker points="1696,462 1778,462 1784,518 1700,518">
      <path d="M1723 488V479Q1724 471 1739 471T1755 479V487" fill="none" stroke="#4a4a4a" strokeWidth="4" />
      <rect x="1720" y="488" width="42" height="20" rx="3" fill="#4a4a4a" />
    </Sticker>
    <Sticker points="1702,543 1791,543 1796,604 1707,604">
      <path d="M1717 574L1733 554H1761L1778 574 1765 593H1733Z" fill="#dcdcdc" stroke="#555" strokeWidth="2.4" />
      <ellipse cx="1748" cy="574" rx="11" ry="8" fill="#eee" stroke="#555" strokeWidth="2.4" />
    </Sticker>
    <BigNumber x="1741" y="918" textLength="71" lengthAdjust="spacingAndGlyphs">01</BigNumber>

    {/* cursor */}
    <path d="M1599 433V451L1603 447 1606 453 1609 452 1606 446 1611 446Z" fill="#fff" stroke="#222" strokeWidth="0.8" />
  </SceneSvg>
);

/* ---------- data ---------- */

const NAV_TABS = [
  { label: "准备", icon: <Box size={18} strokeWidth={1.4} />, active: true },
  { label: "预览", icon: <Layers size={18} strokeWidth={1.4} /> },
  { label: "设备", icon: <DeviceIcon /> },
  { label: "项目", icon: <ProjectIcon /> },
  { label: "校准", icon: <DeviceIcon /> },
];

const PARAM_TABS = ["质量", "强度", "速度", "支撑", "其他", "注释"];

const MM = "mm 或 %";

const SECTIONS = [
  {
    title: "层高",
    icon: <SectionLayers />,
    mt: 4,
    rows: [
      { label: "层高", value: "0.2", unit: "mm", mod: true },
      { label: "首层层高", value: "0.2", unit: "mm", mod: true },
    ],
  },
  {
    title: "线宽",
    icon: <SectionWidth />,
    rows: [
      { label: "缺省", value: "0.42", unit: MM },
      { label: "首层", value: "0.5", unit: MM },
      { label: "外墙", value: "0.42", unit: MM },
      { label: "内墙", value: "0.45", unit: MM },
      { label: "顶面", value: "0.42", unit: MM },
      { label: "稀疏填充", value: "0.45", unit: MM },
      { label: "内部实心填充", value: "0.42", unit: MM },
      { label: "支撑", value: "0.42", unit: MM },
    ],
  },
  {
    title: "接缝",
    icon: <SectionSeam />,
    rows: [
      { label: "接缝位置", select: "对齐" },
      { label: "交错的内墙接缝", check: false },
      { label: "接缝间隔", value: "10%", unit: MM },
      { label: "斜拼接缝（试验）", select: "无" },
      { label: "自动擦拭速度", check: true },
      { label: "擦拭速度", value: "80%", unit: "mm/s 或 %", off: true },
      { label: "闭环擦拭", check: false },
      { label: "内外墙接缝处回抽速度", check: false },
    ],
  },
];

const Chevron = () => <ChevronDown size={13} strokeWidth={1.1} color="#888" />;

const renderControl = (row) => {
  if (row.select) {
    return (
      <SelectBox $w={120} $h={25}>
        <Chevron />
        {row.select}
      </SelectBox>
    );
  }
  if (row.check !== undefined) {
    return <CheckBox $on={row.check}>{row.check && <Check size={13} strokeWidth={2} />}</CheckBox>;
  }
  return (
    <Field $off={row.off}>
      {row.value}
      <Unit>{row.unit}</Unit>
    </Field>
  );
};

const App = () => {
  return (
    <Root>
      <GlobalStyle />

      <TitleBar>
        <TitleLeft>
          <Menu size={20} strokeWidth={1.3} />
          <TitleBtn $w={48}>文件</TitleBtn>
          <ChevronDown size={14} />
          <TitleSep />
          <TitleBtn>
            <Save size={18} strokeWidth={1.6} />
          </TitleBtn>
          <TitleBtn>
            <FaReply size={15} />
          </TitleBtn>
          <TitleBtn $w={37}>
            <FaShare size={15} />
          </TitleBtn>
          <CalibIcon />
          <TitleBtn $w={30}>&nbsp;校准</TitleBtn>
        </TitleLeft>
        <WindowTitle>Flowrate Test - Pass1</WindowTitle>
        <WindowControls>
          <Minus size={14} strokeWidth={1.2} />
          <Ic s={15} color="#ddd">
            <path d="M5 2h9v7H5zM2 6h9v8H2z" />
          </Ic>
          <X size={15} strokeWidth={1.2} />
        </WindowControls>
      </TitleBar>

      <NavBar>
        <HomeCell>
          <FaHome size={21} />
        </HomeCell>
        {NAV_TABS.map((t) => (
          <NavTab key={t.label} $active={t.active}>
            {t.icon}
            {t.label}
          </NavTab>
        ))}
        <NavActions>
          <SplitButton>
            <SplitArrow>
              <ChevronDown size={12} />
            </SplitArrow>
            <SplitLabel>切片单盘</SplitLabel>
          </SplitButton>
          <SplitButton>
            <SplitArrow>
              <ChevronDown size={12} />
            </SplitArrow>
            <SplitLabel $off>打印单盘</SplitLabel>
          </SplitButton>
        </NavActions>
      </NavBar>

      <Main>
        <Panel>
          <TopStrip />
          <PanelHeader>
            <PrinterIcon />
            <HeaderTitle>打印机</HeaderTitle>
            <HeaderEnd>
              <GearHex />
            </HeaderEnd>
          </PanelHeader>

          <FormRow $mt={16} $pl={3}>
            <SelectBox $w={382}>
              <Chevron />
              Bambu Lab A1 mini 0.4 nozzle
            </SelectBox>
            <HeaderEnd $ml="5px">
              <SquarePen size={15} strokeWidth={1} />
            </HeaderEnd>
          </FormRow>
          <FormRow $mt={5} $pl={10}>
            <BedLabel>热床类型</BedLabel>
            <SelectBox $w={320}>
              <Chevron />
              纹理PEI热床
            </SelectBox>
          </FormRow>

          <PanelHeader $h={35} $mt={16}>
            <SpoolIcon />
            <HeaderTitle>耗材丝</HeaderTitle>
            <HeaderEnd>
              <Plus size={16} strokeWidth={1.4} />
              <IconGap $w={15} />
              <Minus size={16} strokeWidth={1.4} />
              <IconGap $w={25} />
              <SyncIcon />
              <IconGap $w={14} />
              <GearHex />
            </HeaderEnd>
          </PanelHeader>

          <FormRow $mt={18} $pl={8}>
            <Swatch>1</Swatch>
            <SelectBox $w={358} $ml={5}>
              <Chevron />
              JAYO--PLA
            </SelectBox>
            <HeaderEnd $ml="6px">
              <SquarePen size={15} strokeWidth={1} />
            </HeaderEnd>
          </FormRow>

          <PanelHeader $mt={18} $pr={8}>
            <StackIcon />
            <HeaderTitle $ml={11}>工艺</HeaderTitle>
            <ModeToggle>
              <ModeItem $on>全局</ModeItem>
              <ModeItem>对象</ModeItem>
            </ModeToggle>
            <HeaderEnd>
              <AdvLabel>高级</AdvLabel>
              <SwitchTrack>
                <SwitchKnob />
              </SwitchTrack>
              <BarsIcon />
              <IconGap $w={2} />
              <FilterIcon />
            </HeaderEnd>
          </PanelHeader>

          <FormRow $mt={12} $pl={7}>
            <ResetSlot $w={22}>
              <RotateCw size={14} strokeWidth={1.2} />
            </ResetSlot>
            <SelectBox $w={325}>
              <Chevron />* 0.20mm Standard @BBL A1M
            </SelectBox>
            <HeaderEnd $ml="17px" $gap={9}>
              <DiskIcon />
              <Search size={15} strokeWidth={1.2} />
            </HeaderEnd>
          </FormRow>

          <TabRow>
            {PARAM_TABS.map((t, i) => (
              <ParamTab key={t} $active={i === 0}>
                {t}
              </ParamTab>
            ))}
          </TabRow>

          {SECTIONS.map((s) => (
            <div key={s.title}>
              <SectionHeader $mt={s.mt}>
                {s.icon}
                <SectionTitle>{s.title}</SectionTitle>
              </SectionHeader>
              {s.rows.map((r) => (
                <ParamRow key={r.label} $mod={r.mod}>
                  <ParamLabel>{r.label}</ParamLabel>
                  <ResetSlot>{r.mod && <RotateCw size={14} strokeWidth={1.2} />}</ResetSlot>
                  <FieldSlot>{renderControl(r)}</FieldSlot>
                </ParamRow>
              ))}
            </div>
          ))}

          <ScrollTrack>
            <ScrollThumb />
            <ScrollArrow>
              <ChevronDown size={14} strokeWidth={2} />
            </ScrollArrow>
          </ScrollTrack>
        </Panel>
        <PanelDivider />

        <Canvas>
          <Scene />
          <CollapseBtn>
            <CollapseUp>
              <ChevronsRight size={16} strokeWidth={1.2} />
            </CollapseUp>
            <CollapseDown>
              <ChevronsLeft size={16} strokeWidth={1.2} />
            </CollapseDown>
          </CollapseBtn>
          <Toolbar>
            {["cube", "grid", "auto", "layout"].map((k) => (
              <ToolBtn key={k}>{TOOL_ICONS[k]}</ToolBtn>
            ))}
            {["page0", "pageP", "lines"].map((k, i) => (
              <ToolBtn key={k} $off $ml={i === 0 ? 8 : 0}>
                {TOOL_ICONS[k]}
              </ToolBtn>
            ))}
            <ToolSep $ml={12} />
            {["move", "rotate", "scale"].map((k) => (
              <ToolBtn key={k}>{TOOL_ICONS[k]}</ToolBtn>
            ))}
            {["lay", "cut", "bool", "support", "seam"].map((k) => (
              <ToolBtn key={k} $off>
                {TOOL_ICONS[k]}
              </ToolBtn>
            ))}
            <ToolBtn>{TOOL_ICONS.text}</ToolBtn>
            <ToolBtn $off>{TOOL_ICONS.ruler}</ToolBtn>
            <ToolSep $ml={16} />
            <ToolBtn>{TOOL_ICONS.puzzle}</ToolBtn>
          </Toolbar>
          <Notice>
            当前选择的对象数量: 9
            <NoticeClose>
              <X size={20} strokeWidth={1} />
            </NoticeClose>
          </Notice>
        </Canvas>
      </Main>

      <TaskBar>
        <TaskIcon $w={48}>
          <FaWindows size={17} />
        </TaskIcon>
        <TaskIcon $w={48}>
          <Ic s={17} color="#eee">
            <path d="M2 4h9v8H2zM2 2h9M2 14h9M14 2v2M14 6v4M14 12v2" />
          </Ic>
        </TaskIcon>
        <TaskIcon $w={50}>
          <EdgeLogo />
        </TaskIcon>
        <TaskIcon $w={50}>
          <FolderLogo />
        </TaskIcon>
        <TaskIcon $w={46}>
          <StoreLogo />
        </TaskIcon>
        <TaskApp>
          <BambuLogo />
          未命名 - BambuSt...
        </TaskApp>
        <TaskApp>
          <NotepadLogo />
          *新建文本文档 - 记...
        </TaskApp>
        <TaskApp>
          <CalcLogo />
          &nbsp;计算器
        </TaskApp>
        <TaskApp $active>
          <StudioLogo />
          Flowrate Test - P...
        </TaskApp>
        <Tray>
          <ChevronUp size={15} strokeWidth={1.4} />
          <TrayItem $ml={9}>
            <Mic size={16} strokeWidth={1.6} fill="#eee" />
          </TrayItem>
          <TrayItem $ml={9}>
            <Monitor size={17} strokeWidth={1.2} />
          </TrayItem>
          <TrayItem $ml={6}>
            <Volume1 size={18} strokeWidth={1.2} />
          </TrayItem>
          <TrayItem $ml={5} $size={15}>
            英
          </TrayItem>
          <ImeBox>拼</ImeBox>
          <Clock>
            12:01
            <br />
            2024/6/15
          </Clock>
          <MessageSquare size={18} strokeWidth={1.2} />
        </Tray>
      </TaskBar>

      <CaptionTop>3D打印:</CaptionTop>
      <CaptionMain>如何调整流量比例</CaptionMain>
    </Root>
  );
};

export default App;
